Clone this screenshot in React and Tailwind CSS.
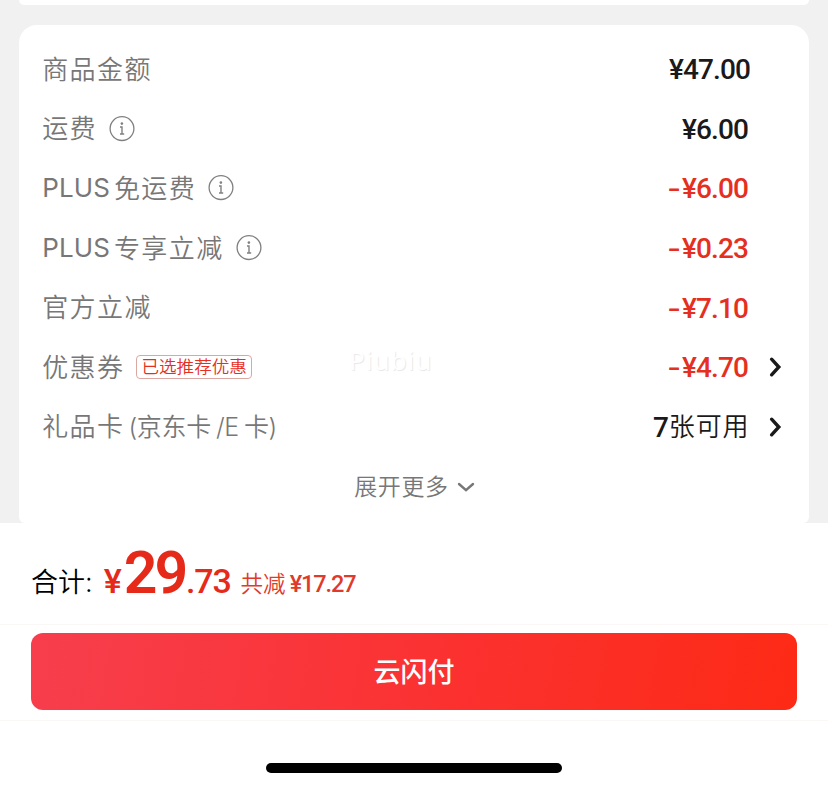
const CJK = "font-['Inter','Noto_Sans_CJK_SC',sans-serif]";
const NUM = "font-['Roboto','Noto_Sans_CJK_SC',sans-serif]";

const rows = [
  { label: '商品金额', value: '¥47.00' },
  { label: '运费', value: '¥6.00', info: true },
  { latin: 'PLUS', label: '免运费', value: '-¥6.00', info: true, discount: true },
  { latin: 'PLUS', label: '专享立减', value: '-¥0.23', info: true, discount: true },
  { label: '官方立减', value: '-¥7.10', discount: true },
  { label: '优惠券', value: '-¥4.70', tag: '已选推荐优惠', discount: true, arrow: true },
];

function InfoIcon() {
  return (
    <svg className="ml-3 size-[26px] shrink-0 text-[#808080]" viewBox="0 0 26 26" fill="none" stroke="currentColor">
      <circle cx="13" cy="12.6" r="11.9" strokeWidth="1.3" />
      <circle cx="12.9" cy="7.6" r="1.3" fill="currentColor" stroke="none" />
      <path d="M11 11h2v6.9M11 18h4.2" strokeWidth="1.4" />
    </svg>
  );
}

function ArrowRight() {
  return (
    <svg className="h-6 w-4 shrink-0" viewBox="0 0 16 24" fill="none" stroke="#1a1a1a" strokeWidth="3.4" strokeLinecap="round" strokeLinejoin="miter">
      <path d="M4.6 4.2l7.2 7.8-7.2 7.8" />
    </svg>
  );
}

function Amount({ children, discount }) {
  const sign = children.startsWith('-');
  return (
    <span className={`${NUM} flex items-center pt-[2px] text-[28px] font-medium ${discount ? 'text-[#e5301f]' : 'text-[#1a1a1a]'}`}>
      {sign && <span className="mr-[2px] inline-block origin-right scale-x-[1.35]">-</span>}
      <span className="tracking-[-0.9px]">{children.replace('-', '')}</span>
    </span>
  );
}

function Row({ latin, label, value, info, tag, discount, arrow }) {
  return (
    <div className="flex h-[59.6px] items-center">
      <div className="flex items-center text-[#777]">
        {latin && <span className="mr-[4px] text-[26px] tracking-[0.1px]">{latin}</span>}
        <span className="pt-[1px] text-[26px] font-[350] tracking-[1.4px]">{label}</span>
        {info && <InfoIcon />}
        {tag && (
          <span className="ml-3 flex h-6 items-center rounded-[4px] border border-[#dba7a2] px-[4px] text-[17.6px] font-[350] text-[#e5301f]">
            {tag}
          </span>
        )}
      </div>
      <div className="ml-auto flex w-[140px] shrink-0 items-center">
        <span className="ml-auto mr-[61px] flex shrink-0">
          <Amount discount={discount}>{value}</Amount>
        </span>
        {arrow && (
          <span className="-ml-[42px] mr-[26px] flex">
            <ArrowRight />
          </span>
        )}
      </div>
    </div>
  );
}

export default function App() {
  return (
    <div className={`${CJK} flex h-[788px] w-[828px] flex-col overflow-hidden bg-white leading-none`}>
      <main className="flex h-[522.5px] flex-col bg-[#f1f1f1] px-[19px]">
        <div className="h-[5px] shrink-0 rounded-b-[14px] bg-white" />
        <section className="relative mt-5 h-[497.5px] rounded-t-[18px] rounded-b-[6px] bg-white pt-[14.5px] pl-[23.2px]">
          {rows.map((row) => (
            <Row key={row.label} {...row} />
          ))}

          <div className="flex h-[59.6px] items-center text-[#777]">
            <span className="pt-[1px] text-[26px] font-[350] tracking-[1.4px]">礼品卡</span>
            <span className="ml-1 flex items-center gap-[5px] pt-[2px] text-[25px] font-[350] tracking-[-0.3px]">
              <span>(京东卡</span>
              <span>/E</span>
              <span>卡)</span>
            </span>
            <span className="ml-auto flex items-center text-[#1a1a1a]">
              <span className={`${NUM} pt-[2px] text-[28px] font-medium`}>7</span>
              <span className="pt-[1px] text-[26px] font-[350] tracking-[0.9px]">张可用</span>
            </span>
            <span className="ml-[17.5px] mr-[26px] flex">
              <ArrowRight />
            </span>
          </div>

          <div className="flex h-[60px] items-center pl-[312px] text-[#777]">
            <span className="pt-[2px] text-[23px] font-[350] tracking-[0.6px]">展开更多</span>
            <svg className="ml-[8px] h-3 w-[18px]" viewBox="0 0 18 12" fill="none" stroke="currentColor" strokeWidth="2.4" strokeLinecap="round">
              <path d="M2 3l7 6.2 7-6.2" />
            </svg>
          </div>

          {/* watermark */}
          <span className="absolute top-[322px] left-[330px] font-['Noto_Sans',sans-serif] text-[26px] tracking-[1px] text-white [text-shadow:1px_1px_1px_#e8e8e8]">
            Piubiu
          </span>
        </section>
      </main>

      <footer className="flex flex-col">
        <div className="flex h-[102.5px] items-baseline border-b border-[#faf7f6] pt-[20px] pl-[31px]">
          <span className="-translate-y-px text-[27px] font-[350] text-black">合计:</span>
          <span className={`${NUM} ml-[11px] text-[34px] font-medium text-[#e62a1a]`}>¥</span>
          <span className={`${NUM} ml-[2px] text-[59px] font-semibold tracking-[-3px] text-[#e62a1a]`}>29</span>
          <span className={`${NUM} ml-[1px] text-[34px] font-medium tracking-[-1.2px] text-[#e62a1a]`}>.73</span>
          <span className="ml-[10px] -translate-y-px text-[22.5px] font-[350] text-[#e03a2a]">共减</span>
          <span className={`${NUM} ml-[4px] -translate-y-px text-[23.5px] font-medium tracking-[-1.1px] text-[#e03a2a]`}>¥17.27</span>
        </div>
        <div className="flex h-24 border-b border-[#faf7f6] px-[31px] pt-2">
          <button className="h-[77px] w-full rounded-[12px] bg-linear-[100deg,#f73e4d,#fb3130_55%,#fd2a15] pt-[2px] text-[27px] font-medium text-white">
            云闪付
          </button>
        </div>
        <div className="mt-[42px] h-[10px] w-[296px] self-center rounded-full bg-black" />
      </footer>
    </div>
  );
}
